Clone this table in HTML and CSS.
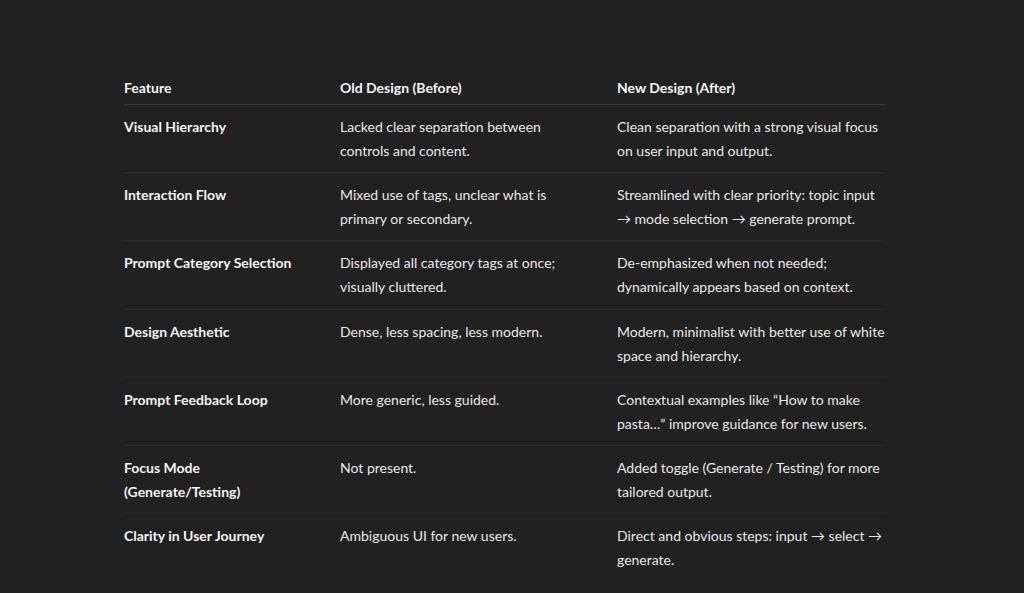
FILE: index.html
```html
<!DOCTYPE html>
<html lang="en">
<head>
<meta charset="utf-8">
<title>Design comparison</title>
<link rel="stylesheet" href="styles.css">
</head>
<body>
<main class="page">
  <table class="compare">
    <colgroup>
      <col class="c1"><col class="c2"><col class="c3">
    </colgroup>
    <thead>
      <tr><th>Feature</th><th>Old Design (Before)</th><th>New Design (After)</th></tr>
    </thead>
    <tbody>
      <tr><th>Visual Hierarchy</th><td>Lacked clear separation between controls and content.</td><td><div class="after">Clean separation with a strong visual focus on user input and output.</div></td></tr>
      <tr><th>Interaction Flow</th><td>Mixed use of tags, unclear what is primary or secondary.</td><td><div class="after">Streamlined with clear priority: topic input → mode selection → generate prompt.</div></td></tr>
      <tr><th>Prompt Category Selection</th><td>Displayed all category tags at once; visually cluttered.</td><td><div class="after">De-emphasized when not needed; dynamically appears based on context.</div></td></tr>
      <tr><th>Design Aesthetic</th><td>Dense, less spacing, less modern.</td><td><div class="after">Modern, minimalist with better use of white space and hierarchy.</div></td></tr>
      <tr><th>Prompt Feedback Loop</th><td>More generic, less guided.</td><td><div class="after">Contextual examples like “How to make pasta…” improve guidance for new users.</div></td></tr>
      <tr><th>Focus Mode (Generate/Testing)</th><td>Not present.</td><td><div class="after">Added toggle (Generate / Testing) for more tailored output.</div></td></tr>
      <tr><th>Clarity in User Journey</th><td>Ambiguous UI for new users.</td><td><div class="after">Direct and obvious steps: input → select → generate.</div></td></tr>
    </tbody>
  </table>
</main>
</body>
</html>
```
FILE: styles.css
```css
html, body {
  margin: 0;
  padding: 0;
  background: #212121;
}
body {
  font-family: Lato, "Noto Sans", sans-serif;
  font-size: 14px;
  line-height: 24px;
  color: #ececec;
}
.page {
  padding: 76px 0 0 124px;
}
.compare {
  width: 761px;
  border-collapse: collapse;
  table-layout: fixed;
}
.c1 { width: 216px; }
.c2 { width: 277px; }
.c3 { width: 268px; }
.compare th, .compare td {
  text-align: left;
  vertical-align: top;
  padding: 10px 0 9px 0;
}
.compare tbody th {
  padding-right: 31px;
}
.compare tbody td:nth-child(2) {
  padding-right: 37px;
}
.after {
  margin-right: -4px;
}
.compare th {
  font-weight: 700;
  color: #f4f4f4;
}
.compare td {
  font-weight: 400;
  color: #e8e8e8;
}
.compare thead th {
  padding: 0 0 4px 0;
  border-bottom: 1px solid #3a3a3a;
}
.compare tbody tr {
  border-bottom: 1px solid #2d2d2d;
}
.compare tbody tr:nth-child(3) td,
.compare tbody tr:nth-child(3) th {
  padding-bottom: 10px;
}
.compare tbody tr:last-child {
  border-bottom: none;
}
```
